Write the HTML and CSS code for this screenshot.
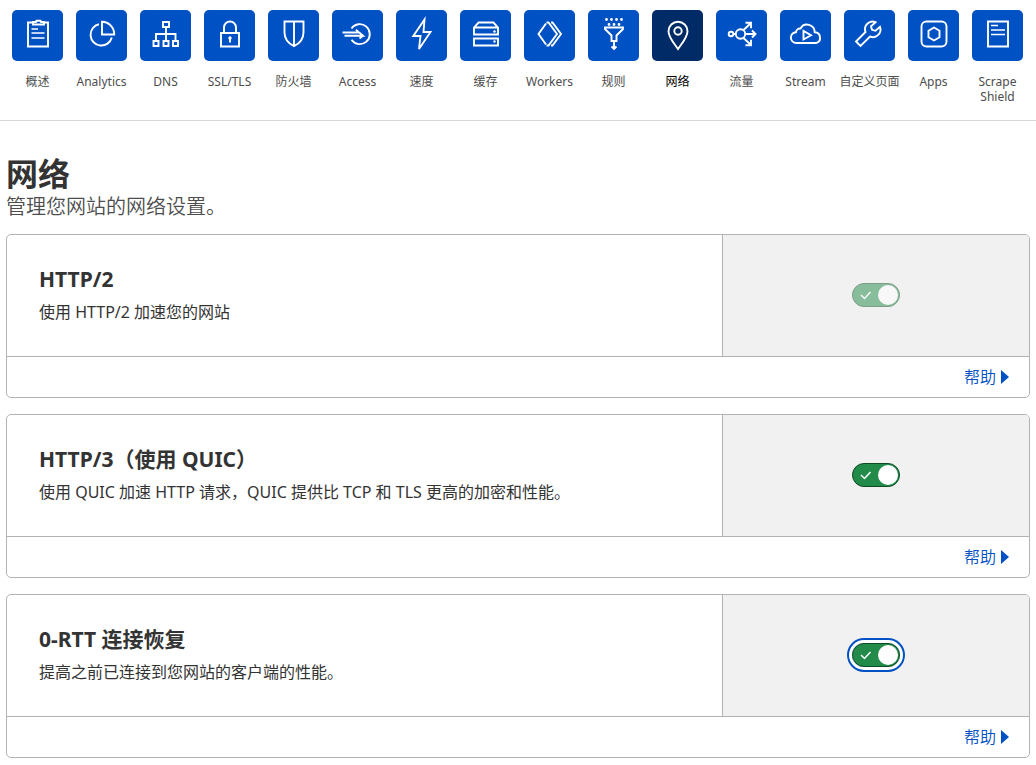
FILE: index.html
```
<!DOCTYPE html>
<html lang="zh-CN">
<head>
<meta charset="utf-8">
<meta name="viewport" content="width=device-width, initial-scale=1">
<title>网络</title>
<link rel="stylesheet" href="styles.css">
</head>
<body>
<nav class="nav">
  <a class="nav-item" href="#"><span class="tile"><svg class="icon" viewBox="0 0 51 51"><path d="M20 12.500h-4v24h20v-24h-4"/><path d="M21 14.500v-2.500h3l.5-1.200h4l.5 1.200h3v2.500z"/><path class="thin" d="M19.500 19h6.500M19.500 23h13M19.500 28h13"/></svg></span><span class="label">概述</span></a>
  <a class="nav-item" href="#"><span class="tile"><svg class="icon" viewBox="0 0 51 51"><path d="M23 14.200A10.800 10.800 0 1 0 35.800 27.500"/><path d="M26 11.800v12.700h12.200A12.300 12.300 0 0 0 26 11.800z"/></svg></span><span class="label">Analytics</span></a>
  <a class="nav-item" href="#"><span class="tile"><svg class="icon" viewBox="0 0 51 51"><path d="M23 12h6v5h-6zM13.500 31h5v5h-5zM23.500 31h5v5h-5zM33 31h5v5h-5zM26 17v14M16 31v-7h19.500v7"/></svg></span><span class="label">DNS</span></a>
  <a class="nav-item" href="#"><span class="tile"><svg class="icon" viewBox="0 0 51 51"><path d="M17 23h18v13.500H17zM20 23v-5.500a6 6 0 0 1 12 0V23M26 29v3.500"/><circle class="solid" cx="26" cy="28" r="1.700"/></svg></span><span class="label">SSL/TLS</span></a>
  <a class="nav-item" href="#"><span class="tile"><svg class="icon" viewBox="0 0 51 51"><path d="M16.500 11.500h19v11c0 6-4 11-9.500 13.700-5.500-2.700-9.500-7.700-9.500-13.700zM26 11.500v24"/></svg></span><span class="label">防火墙</span></a>
  <a class="nav-item" href="#"><span class="tile"><svg class="icon" viewBox="0 0 51 51"><path d="M19.500 18.500A10 10 0 1 1 19.500 29.800M10.500 22.500h16.500l-3-2.700M12.500 25.700h18.500l-3.500-3M27.500 28.500l3.500-2.800"/></svg></span><span class="label">Access</span></a>
  <a class="nav-item" href="#"><span class="tile"><svg class="icon" viewBox="0 0 51 51"><path d="M28.500 9.500L17.300 26h7.200l-1.500 13 11.500-17h-7z"/></svg></span><span class="label">速度</span></a>
  <a class="nav-item" href="#"><span class="tile"><svg class="icon" viewBox="0 0 51 51"><path d="M14 24.500v-7l4.500-5h15l4.500 5v7zM14 17.500h24M14 28.500h24v7H14z"/><circle class="solid" cx="34.500" cy="21.500" r="1.200"/><circle class="solid" cx="34.500" cy="31.500" r="1.200"/></svg></span><span class="label">缓存</span></a>
  <a class="nav-item" href="#"><span class="tile"><svg class="icon" viewBox="0 0 51 51"><path d="M22 13.500L14.500 24l7.500 10.500M22.500 12.500h2l8.500 11.500-8.500 11.500h-2M27 12.500h1.500L37 24l-8.500 11.500H27"/></svg></span><span class="label">Workers</span></a>
  <a class="nav-item" href="#"><span class="tile"><svg class="icon" viewBox="0 0 51 51"><path d="M17 17.500h18v1.500l-6.500 6.500v5.500h-5v-5.500l-6.500-6.500zM26 31v8M23.500 36.500l2.500 2.500 2.500-2.500"/><path class="dots" d="M18.500 9.500h.010M23.500 9.500h.010M28.500 9.500h.010M33.500 9.500h.010M21 14.500h.010M26 14.500h.010M31 14.500h.010"/></svg></span><span class="label">规则</span></a>
  <a class="nav-item active" href="#" aria-current="page"><span class="tile"><svg class="icon" viewBox="0 0 51 51"><path d="M26 39c-3-4.500-9.500-11.500-9.500-17.800a9.500 9.500 0 0 1 19 0C35.500 27.500 29 34.500 26 39z"/><circle cx="26" cy="21" r="3.700"/></svg></span><span class="label">网络</span></a>
  <a class="nav-item" href="#"><span class="tile"><svg class="icon" viewBox="0 0 51 51"><circle cx="15" cy="24" r="2.300"/><circle cx="24.500" cy="24" r="4.700"/><path d="M17.500 24H20M29.500 24H39M36 20.500l3.500 3.500-3.500 3.500M27.500 20l7.500-7M29.500 12.800h5.500v5.500M27.500 28l7.500 7M29.500 35.200h5.500v-5.500"/></svg></span><span class="label">流量</span></a>
  <a class="nav-item" href="#"><span class="tile"><svg class="icon" viewBox="0 0 51 51"><path d="M16.500 33a5.400 5.400 0 0 1-.5-10.800 4 4 0 0 1 4.500-3.700 7.600 7.600 0 0 1 14.200 3.700A5.500 5.500 0 0 1 36 33z"/><path d="M23.500 21v8.500l7.500-4.200z"/></svg></span><span class="label">Stream</span></a>
  <a class="nav-item" href="#"><span class="tile"><svg class="icon" viewBox="0 0 51 51"><path d="M31.500 12.200a7.600 7.600 0 0 0-10 9.700l-9.500 9.600 4.500 4.500 9.500-9.500a7.600 7.600 0 0 0 10-9.700l-4.500 4-3.500-1-1-3.500z"/></svg></span><span class="label">自定义页面</span></a>
  <a class="nav-item" href="#"><span class="tile"><svg class="icon" viewBox="0 0 51 51"><rect x="13.500" y="11.500" width="25" height="25" rx="5"/><path d="M26 17.500l5.500 3.300v6.400L26 30.500l-5.500-3.300v-6.400z"/></svg></span><span class="label">Apps</span></a>
  <a class="nav-item" href="#"><span class="tile"><svg class="icon" viewBox="0 0 51 51"><path d="M16 11.500h20v25H16z"/><path class="thin" d="M19 15.500h7M19 20h14M19 24.500h14"/></svg></span><span class="label">Scrape Shield</span></a>
</nav>

<main class="page">
  <h1 class="title">网络</h1>
  <p class="subtitle">管理您网站的网络设置。</p>

  <section class="card">
    <div class="card-main">
      <div class="card-text">
        <h2 class="card-title" id="http2">HTTP/2</h2>
        <p class="card-desc">使用 HTTP/2 加速您的网站</p>
      </div>
      <div class="card-control">
        <label class="toggle disabled"><input class="toggle-input" type="checkbox" checked disabled aria-labelledby="http2"><svg class="toggle-mark" viewBox="0 0 48 24"><path d="M9 12l3.500 3.500 6-6.500"/><circle cx="36" cy="12" r="10"/></svg></label>
      </div>
    </div>
    <div class="card-footer"><a class="help" href="#">帮助<svg class="arrow" viewBox="0 0 8 14"><path d="M0 0l8 7-8 7z"/></svg></a></div>
  </section>

  <section class="card">
    <div class="card-main">
      <div class="card-text">
        <h2 class="card-title" id="http3">HTTP/3（使用 QUIC）</h2>
        <p class="card-desc">使用 QUIC 加速 HTTP 请求，QUIC 提供比 TCP 和 TLS 更高的加密和性能。</p>
      </div>
      <div class="card-control">
        <label class="toggle"><input class="toggle-input" type="checkbox" checked aria-labelledby="http3"><svg class="toggle-mark" viewBox="0 0 48 24"><path d="M9 12l3.500 3.500 6-6.500"/><circle cx="36" cy="12" r="10"/></svg></label>
      </div>
    </div>
    <div class="card-footer"><a class="help" href="#">帮助<svg class="arrow" viewBox="0 0 8 14"><path d="M0 0l8 7-8 7z"/></svg></a></div>
  </section>

  <section class="card">
    <div class="card-main">
      <div class="card-text">
        <h2 class="card-title" id="zerortt">0-RTT 连接恢复</h2>
        <p class="card-desc">提高之前已连接到您网站的客户端的性能。</p>
      </div>
      <div class="card-control">
        <label class="toggle focused"><input class="toggle-input" type="checkbox" checked aria-labelledby="zerortt"><svg class="toggle-mark" viewBox="0 0 48 24"><path d="M9 12l3.500 3.500 6-6.500"/><circle cx="36" cy="12" r="10"/></svg></label>
      </div>
    </div>
    <div class="card-footer"><a class="help" href="#">帮助<svg class="arrow" viewBox="0 0 8 14"><path d="M0 0l8 7-8 7z"/></svg></a></div>
  </section>
</main>
</body>
</html>
```
FILE: styles.css
```
* { box-sizing: border-box; }

body {
  margin: 0;
  background: #fff;
  color: #333;
  font-family: "Noto Sans", "Noto Sans CJK SC", sans-serif;
  font-size: 16px;
}

h1, h2, p { margin: 0; }

a { text-decoration: none; }

.nav {
  display: flex;
  padding: 10px 6px 16px;
  border-bottom: 1px solid #d5d7d8;
}

.nav-item {
  flex: 1 1 0;
  min-width: 0;
  display: flex;
  flex-direction: column;
  align-items: center;
  gap: 13px;
  padding-right: 1px;
  color: #4d4d4d;
  font-size: 12px;
  line-height: 15px;
  text-align: center;
}

.nav-item.active { color: #000; }

.tile {
  display: block;
  width: 51px;
  height: 51px;
  border-radius: 5px;
  background: #0051c3;
}

.active .tile { background: #002b66; }

.icon {
  display: block;
  width: 51px;
  height: 51px;
  fill: none;
  stroke: #fff;
  stroke-width: 1.9;
}

.icon .thin { stroke-width: 1.6; }
.icon .dots { stroke-width: 2.8; stroke-linecap: round; }
.icon .solid { fill: #fff; stroke: none; }

.page { padding: 33px 6px 7px; }

.title {
  font-size: 32px;
  line-height: 40px;
  font-weight: 700;
}

.subtitle {
  margin-bottom: 15px;
  color: #4d4d4d;
  font-size: 20px;
  line-height: 25px;
  font-weight: 350;
}

.card {
  border: 1px solid #b3b3b3;
  border-radius: 5px;
  overflow: hidden;
}

.card + .card { margin-top: 16px; }

.card-main {
  display: grid;
  grid-template-columns: 7fr 3fr;
  border-bottom: 1px solid #b3b3b3;
}

.card-text { padding: 32px; }

.card-title {
  margin-bottom: 8px;
  font-size: 21px;
  line-height: 25px;
  font-weight: 700;
}

.card-desc { line-height: 24px; }

.card-control {
  display: flex;
  align-items: center;
  justify-content: center;
  padding-bottom: 1px;
  border-left: 1px solid #b3b3b3;
  background: #f1f1f1;
}

.toggle {
  display: grid;
  width: 48px;
  height: 24px;
  border-radius: 12px;
}

.toggle.disabled { opacity: 0.5; }

.toggle.focused { box-shadow: 0 0 0 3px #fff, 0 0 0 5px #0051c3; }

.toggle-input {
  grid-area: 1 / 1;
  appearance: none;
  width: 48px;
  height: 24px;
  margin: 0;
  border: 1px solid #0f4a25;
  border-radius: 12px;
  background: #228b49;
  outline: none;
}

.toggle-mark {
  grid-area: 1 / 1;
  width: 48px;
  height: 24px;
  pointer-events: none;
}

.toggle-mark path { fill: none; stroke: #fff; stroke-width: 1.5; }
.toggle-mark circle { fill: #fff; }

.card-footer {
  display: flex;
  justify-content: flex-end;
  padding: 8px 20px;
}

.help {
  display: flex;
  align-items: center;
  gap: 5px;
  color: #0051c3;
  line-height: 24px;
  font-weight: 350;
}

.arrow {
  width: 8px;
  height: 14px;
  fill: #0051c3;
}
```
